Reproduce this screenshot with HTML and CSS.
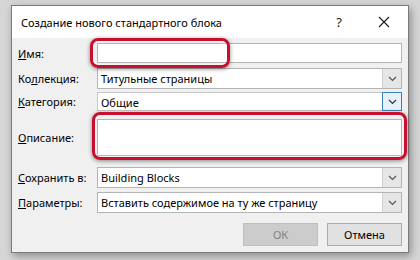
FILE: index.html
```html
<!DOCTYPE html>
<html lang="ru">
<head>
<meta charset="utf-8">
<link rel="stylesheet" href="styles.css">
</head>
<body>
<div class="dialog">
  <div class="titlebar">
    <span class="title">Создание нового стандартного блока</span>
    <span class="help">?</span>
    <svg class="close" width="12" height="12" viewBox="0 0 12 12"><path d="M1 1L11 11M11 1L1 11" stroke="#1a1a1a" stroke-width="1.1"/></svg>
  </div>
  <div class="content">
    <div class="row r-name">
      <label class="lbl"><u>И</u>мя:</label>
      <div class="field input"></div>
    </div>
    <div class="row r-coll">
      <label class="lbl">Ко<u>л</u>лекция:</label>
      <div class="field combo"><span class="val">Титульные страницы</span><span class="btn"><svg width="9" height="6" viewBox="0 0 9 6"><path d="M1 1L4.5 4.5L8 1" fill="none" stroke="#555" stroke-width="1.2"/></svg></span></div>
    </div>
    <div class="row r-cat">
      <label class="lbl"><u>К</u>атегория:</label>
      <div class="field combo"><span class="val">Общие</span><span class="btn hot"><svg width="9" height="6" viewBox="0 0 9 6"><path d="M1 1L4.5 4.5L8 1" fill="none" stroke="#333" stroke-width="1.2"/></svg></span></div>
    </div>
    <div class="row r-desc">
      <label class="lbl"><u>О</u>писание:</label>
      <div class="field area"></div>
    </div>
    <div class="row r-save">
      <label class="lbl"><u>С</u>охранить в:</label>
      <div class="field combo"><span class="val">Building Blocks</span><span class="btn"><svg width="9" height="6" viewBox="0 0 9 6"><path d="M1 1L4.5 4.5L8 1" fill="none" stroke="#555" stroke-width="1.2"/></svg></span></div>
    </div>
    <div class="row r-opt">
      <label class="lbl"><u>П</u>араметры:</label>
      <div class="field combo"><span class="val">Вставить содержимое на ту же страницу</span><span class="btn"><svg width="9" height="6" viewBox="0 0 9 6"><path d="M1 1L4.5 4.5L8 1" fill="none" stroke="#555" stroke-width="1.2"/></svg></span></div>
    </div>
    <div class="buttons">
      <button class="pbtn disabled">ОК</button>
      <button class="pbtn">Отмена</button>
    </div>
  </div>
  <div class="mark mark-name"></div>
  <div class="mark mark-desc"></div>
</div>
</body>
</html>
```
FILE: styles.css
```css
html, body {
  margin: 0;
  padding: 0;
}
body {
  width: 420px;
  height: 260px;
  background: #d6d6d6;
  font-family: "Noto Sans", "Segoe UI", sans-serif;
  font-size: 11px;
  color: #000;
  overflow: hidden;
}
.dialog {
  position: relative;
  margin: 5px 0 0 11px;
  width: 396px;
  height: 246px;
  border: 1px solid #7a7a7a;
  background: #f0f0f0;
  box-shadow: 2px 3px 8px rgba(0,0,0,0.35);
  display: flex;
  flex-direction: column;
}
.titlebar {
  height: 32px;
  background: #fff;
  display: flex;
  align-items: center;
  padding-left: 9px;
  flex: none;
}
.title {
  flex: 1;
  font-size: 11px;
  margin-top: 1px;
}
.help {
  font-size: 13px;
  margin-right: 36px;
  color: #222;
}
.close {
  margin-right: 18px;
}
.content {
  padding: 5px 6px 0 6px;
  display: flex;
  flex-direction: column;
}
.row {
  display: flex;
  align-items: center;
}
.lbl {
  width: 79px;
  flex: none;
}
.field {
  flex: 1;
  background: #fff;
  border: 1px solid #b4b4b4;
  box-sizing: border-box;
}
.r-name .field { height: 20px; }
.r-coll { margin-top: 5px; }
.r-coll .field { height: 21px; }
.r-cat { margin-top: 3px; }
.r-cat .field { height: 19px; border-color: #c8c8c8; }
.r-desc { margin-top: 8px; }
.r-desc .field { height: 37px; }
.r-save { margin-top: 11px; }
.r-save .field, .r-opt .field { height: 21px; }
.r-opt { margin-top: 4px; }
.combo {
  display: flex;
  align-items: stretch;
}
.val {
  flex: 1;
  padding-left: 3px;
  line-height: 19px;
  white-space: nowrap;
  overflow: hidden;
}
.btn {
  width: 18px;
  background: #e6e6e6;
  border-left: 1px solid #d2d2d2;
  display: flex;
  align-items: center;
  justify-content: center;
}
.btn.hot {
  background: #e5f1fb;
  border: 1px solid #3c7fb1;
  margin: -1px -1px -1px 0;
}
.buttons {
  display: flex;
  justify-content: flex-end;
  gap: 9px;
  margin-top: 10px;
}
.pbtn {
  width: 75px;
  height: 23px;
  font-family: inherit;
  font-size: 11px;
  background: #e1e1e1;
  border: 1px solid #adadad;
  color: #000;
  padding: 0;
}
.pbtn.disabled {
  background: #cccccc;
  border-color: #bfbfbf;
  color: #838383;
}
.mark {
  position: absolute;
  border: 3px solid #c8102e;
  border-radius: 8px;
  box-shadow: 0 1px 4px rgba(0,0,0,0.45), inset 0 0 2px rgba(255,255,255,0.9);
}
.mark-name {
  left: 78px;
  top: 32px;
  width: 134px;
  height: 24px;
}
.mark-desc {
  left: 80px;
  top: 106px;
  width: 309px;
  height: 42px;
}
```
